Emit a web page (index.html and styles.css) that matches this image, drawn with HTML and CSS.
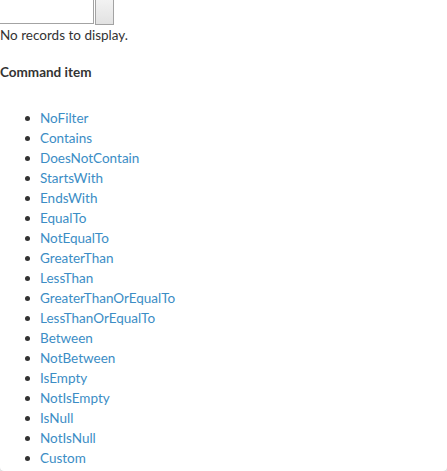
FILE: index.html
```html
<!DOCTYPE html>
<html>
<head>
<meta charset="utf-8">
<link rel="stylesheet" href="styles.css">
</head>
<body>
<div class="panel">
  <div class="filter-row">
    <span class="filter-input"></span><span class="filter-btn"></span>
  </div>
  <div class="no-records">No records to display.</div>
  <h4 class="title">Command item</h4>
  <ul class="cmd-list">
    <li><a href="#">NoFilter</a></li>
    <li><a href="#">Contains</a></li>
    <li><a href="#">DoesNotContain</a></li>
    <li><a href="#">StartsWith</a></li>
    <li><a href="#">EndsWith</a></li>
    <li><a href="#">EqualTo</a></li>
    <li><a href="#">NotEqualTo</a></li>
    <li><a href="#">GreaterThan</a></li>
    <li><a href="#">LessThan</a></li>
    <li><a href="#">GreaterThanOrEqualTo</a></li>
    <li><a href="#">LessThanOrEqualTo</a></li>
    <li><a href="#">Between</a></li>
    <li><a href="#">NotBetween</a></li>
    <li><a href="#">IsEmpty</a></li>
    <li><a href="#">NotIsEmpty</a></li>
    <li><a href="#">IsNull</a></li>
    <li><a href="#">NotIsNull</a></li>
    <li><a href="#">Custom</a></li>
  </ul>
</div>
</body>
</html>
```

FILE: styles.css
```css
html, body {
  margin: 0;
  padding: 0;
  background: #f4f5f7;
}
body {
  font-family: Lato, "Open Sans", sans-serif;
  font-size: 13.5px;
  color: #333;
}
.panel {
  width: 447px;
  background: #fff;
  border-radius: 0 0 4px 4px;
  box-shadow: 0 1px 2px rgba(0, 0, 0, 0.18);
  padding-bottom: 3px;
}
.filter-row {
  display: flex;
  height: 25px;
}
.filter-input {
  width: 93px;
  height: 23px;
  border: 1px solid #a3a3a3;
  border-top: none;
  border-left: none;
  background: #fff;
}
.filter-btn {
  width: 17px;
  height: 24px;
  border: 1px solid #a3a3a3;
  border-top: none;
  background: linear-gradient(#f2f2f2, #e2e2e2);
  margin-left: 1px;
}
.no-records {
  line-height: 20px;
}
.title {
  margin: 19px 0 0;
  font-size: 13.5px;
  font-weight: bold;
  line-height: 16px;
}
.cmd-list {
  margin: 28px 0 0;
  padding-left: 40px;
  list-style: none;
}
.cmd-list li {
  display: flex;
  align-items: center;
  height: 20px;
}
.cmd-list li::before {
  content: "";
  width: 5px;
  height: 5px;
  border-radius: 50%;
  background: #333;
  margin-left: -15px;
  margin-right: 10px;
  flex: none;
}
.cmd-list a {
  color: #3b8dc5;
  text-decoration: none;
}
```
